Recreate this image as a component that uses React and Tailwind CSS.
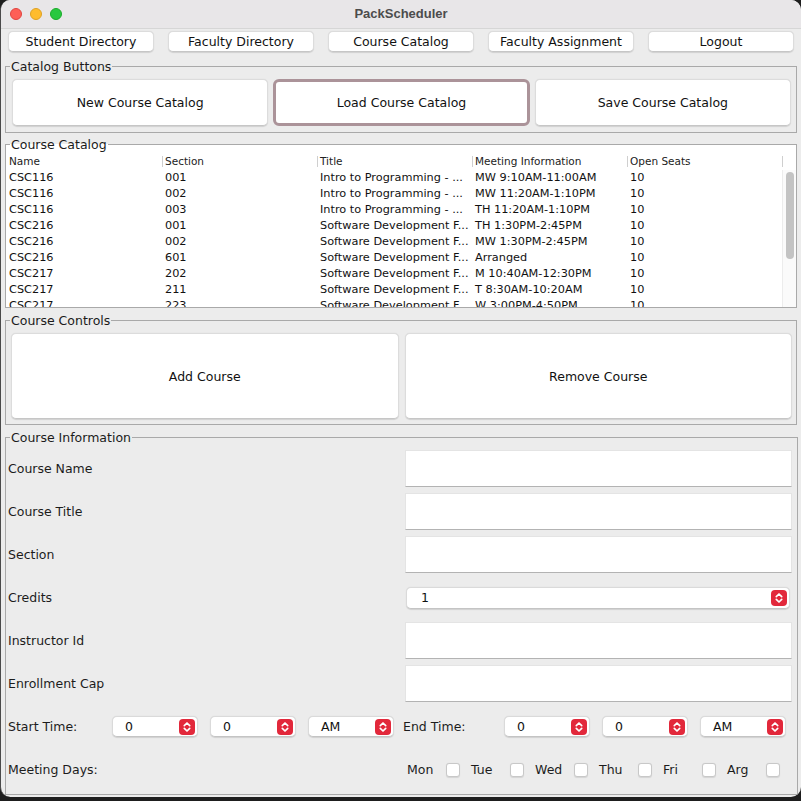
import React from "react";

const Chevron = () => (
  <span className="flex h-[16px] w-[16px] shrink-0 items-center justify-center rounded-[4px] bg-[#e2283b]">
    <svg width="10" height="12" viewBox="0 0 10 12" fill="none" stroke="white" strokeWidth="1.7" strokeLinecap="round" strokeLinejoin="round">
      <path d="M2.3 4.6 L5 2 L7.7 4.6" />
      <path d="M2.3 7.4 L5 10 L7.7 7.4" />
    </svg>
  </span>
);

function Combo({ value, className }) {
  return (
    <div className={`flex items-center justify-between rounded-[5px] border border-[#dadada] border-b-[#c4c4c4] bg-white pr-[2px] shadow-[0_0.5px_1px_rgba(0,0,0,0.12)] ${className}`}>
      <span className="pt-[1px] text-[12.5px] leading-[14px] text-[#111]">{value}</span>
      <Chevron />
    </div>
  );
}

function Panel({ title, className, innerClassName, children }) {
  return (
    <fieldset className={`mx-[4px] border border-[#a9a9a9] ${className}`}>
      <legend className="ml-[4px] h-[14px] px-[1px] text-[12.5px] leading-[16px] text-[#1b1b1b]">{title}</legend>
      <div className={innerClassName}>{children}</div>
    </fieldset>
  );
}

function Btn({ children, className }) {
  return (
    <div className={`flex items-center justify-center rounded-[5px] border border-[#dcdcdc] border-b-[#c6c6c6] bg-white pt-[2px] text-[12.5px] text-[#111] shadow-[0_0.5px_1px_rgba(0,0,0,0.12)] ${className}`}>
      {children}
    </div>
  );
}

const TextField = () => (
  <div className="h-[37px] flex-1 border border-[#e4e4e4] border-b-[#b3b3b3] bg-white" />
);

const rows = [
  ["CSC116", "001", "Intro to Programming - ...", "MW 9:10AM-11:00AM", "10"],
  ["CSC116", "002", "Intro to Programming - ...", "MW 11:20AM-1:10PM", "10"],
  ["CSC116", "003", "Intro to Programming - ...", "TH 11:20AM-1:10PM", "10"],
  ["CSC216", "001", "Software Development F...", "TH 1:30PM-2:45PM", "10"],
  ["CSC216", "002", "Software Development F...", "MW 1:30PM-2:45PM", "10"],
  ["CSC216", "601", "Software Development F...", "Arranged", "10"],
  ["CSC217", "202", "Software Development F...", "M 10:40AM-12:30PM", "10"],
  ["CSC217", "211", "Software Development F...", "T 8:30AM-10:20AM", "10"],
  ["CSC217", "223", "Software Development F...", "W 3:00PM-4:50PM", "10"],
];

const headers = ["Name", "Section", "Title", "Meeting Information", "Open Seats"];
const days = ["Mon", "Tue", "Wed", "Thu", "Fri", "Arg"];

export default function App() {
  return (
    <div className="h-[801px] w-[801px] bg-[#1e1e1e] font-['DejaVu_Sans',Verdana,sans-serif]">
      <div className="flex h-[797px] flex-col overflow-hidden rounded-[10px] border-l border-[#4a4a4a] bg-[#ececec]">
        {/* Title bar */}
        <div className="relative flex h-[29px] shrink-0 items-center justify-center border-b border-[#d6d6d6] bg-[#e8e6e8]">
          <div className="absolute left-[9px] top-[8px] flex gap-[8px]">
            <span className="h-[12px] w-[12px] rounded-full border border-[#e0443e] bg-[#fe5f57]" />
            <span className="h-[12px] w-[12px] rounded-full border border-[#dea123] bg-[#febc2e]" />
            <span className="h-[12px] w-[12px] rounded-full border border-[#1aab29] bg-[#28c840]" />
          </div>
          <span className="font-['Liberation_Sans',Arial,sans-serif] text-[13px] font-bold text-[#4c4c4c]">PackScheduler</span>
        </div>

        {/* Nav */}
        <div className="flex gap-[14px] px-[7px] pt-[2px]">
          {["Student Directory", "Faculty Directory", "Course Catalog", "Faculty Assignment", "Logout"].map((t) => (
            <Btn key={t} className="h-[21px] w-[146px]">{t}</Btn>
          ))}
        </div>

        {/* Catalog Buttons */}
        <Panel title="Catalog Buttons" className="mt-[7px]" innerClassName="grid grid-cols-3 gap-[5px] pb-[6px] pl-[6px] pr-[5px] pt-[6px]">
          <Btn className="h-[47px]">New Course Catalog</Btn>
          <div className="flex h-[47px] items-center justify-center rounded-[6px] border-[3px] border-[#ab9399] bg-white pt-[2px] text-[12.5px] text-[#111]">
            Load Course Catalog
          </div>
          <Btn className="h-[47px]">Save Course Catalog</Btn>
        </Panel>

        {/* Course Catalog */}
        <Panel title="Course Catalog" className="mt-[4px] bg-white" innerClassName="flex h-[156px] overflow-hidden pt-[2px]">
          <div className="w-[776px] shrink-0">
            <div className="grid h-[17px] grid-cols-[156px_155px_155px_155px_155px] items-center">
              {headers.map((h, i) => (
                <div key={h} className="flex items-center">
                  {i > 0 ? <span className="h-[11px] w-px bg-[#cfcfcf]" /> : null}
                  <span className={`text-[10.5px] text-[#222] ${i > 0 ? "pl-[2px]" : "pl-[3px]"}`}>{h}</span>
                </div>
              ))}
            </div>
            {rows.map((r, ri) => (
              <div key={ri} className="grid h-[16px] grid-cols-[156px_155px_155px_155px_155px] items-center">
                {r.map((c, ci) => (
                  <div key={ci} className="overflow-hidden whitespace-nowrap pl-[3px] text-[11.3px] leading-[16px] text-[#111]">
                    {c}
                  </div>
                ))}
              </div>
            ))}
          </div>
          <div className="flex flex-1 flex-col">
            <div className="flex h-[17px] items-center">
              <span className="h-[11px] w-px bg-[#cfcfcf]" />
            </div>
            <div className="flex-1 border-l border-[#ececec] bg-[#fafafa]">
              <div className="ml-[3px] mt-[2px] h-[87px] w-[8px] rounded-full bg-[#c3c3c3]" />
            </div>
          </div>
        </Panel>

        {/* Course Controls */}
        <Panel title="Course Controls" className="mt-[5px]" innerClassName="grid grid-cols-2 gap-[6px] pb-[5px] pl-[5px] pr-[4px] pt-[6px]">
          <Btn className="h-[86px]">Add Course</Btn>
          <Btn className="h-[86px]">Remove Course</Btn>
        </Panel>

        {/* Course Information */}
        <Panel title="Course Information" className="mt-[5px]" innerClassName="flex flex-col gap-[6px] pb-[6px] pl-[2px] pr-[5px] pt-[6px] text-[12.5px] text-[#1c1c1c]">
          {["Course Name", "Course Title", "Section"].map((l) => (
            <div key={l} className="flex h-[37px] items-center">
              <div className="w-[397px] pt-[2px]">{l}</div>
              <TextField />
            </div>
          ))}
          <div className="flex h-[37px] items-center">
            <div className="w-[397px] pt-[2px]">Credits</div>
            <Combo value="1" className="ml-[1px] mr-[2px] h-[22px] flex-1 pl-[14px]" />
          </div>
          {["Instructor Id", "Enrollment Cap"].map((l) => (
            <div key={l} className="flex h-[37px] items-center">
              <div className="w-[397px] pt-[2px]">{l}</div>
              <TextField />
            </div>
          ))}
          <div className="flex h-[37px] items-center">
            <div className="w-[98px] pt-[2px]">Start Time:</div>
            <div className="w-[98px] px-[6px]"><Combo value="0" className="h-[21px] pl-[12px]" /></div>
            <div className="w-[98px] px-[6px]"><Combo value="0" className="h-[21px] pl-[12px]" /></div>
            <div className="w-[98px] px-[6px]"><Combo value="AM" className="h-[21px] pl-[12px]" /></div>
            <div className="w-[98px] pl-[3px] pt-[2px]">End Time:</div>
            <div className="w-[98px] px-[6px]"><Combo value="0" className="h-[21px] pl-[12px]" /></div>
            <div className="w-[98px] px-[6px]"><Combo value="0" className="h-[21px] pl-[12px]" /></div>
            <div className="w-[98px] px-[6px]"><Combo value="AM" className="h-[21px] pl-[12px]" /></div>
          </div>
          <div className="flex h-[37px] items-center">
            <div className="w-[399px] pt-[2px]">Meeting Days:</div>
            {days.map((d) => (
              <div key={d} className="flex w-[64px] items-center">
                <span className="w-[39px] pt-[2px]">{d}</span>
                <span className="h-[14px] w-[14px] rounded-[3px] border border-[#c8c8c8] bg-white shadow-[0_0.5px_1px_rgba(0,0,0,0.1)]" />
              </div>
            ))}
          </div>
        </Panel>
      </div>
    </div>
  );
}
